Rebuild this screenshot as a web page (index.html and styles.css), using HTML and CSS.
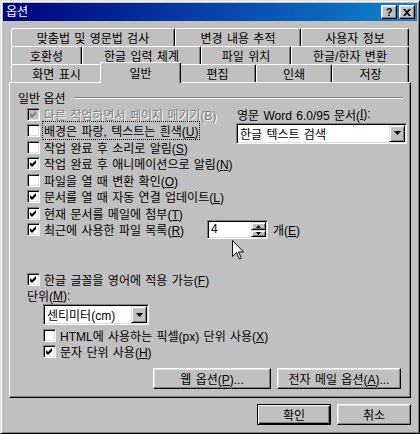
FILE: index.html
```html
<!DOCTYPE html>
<html lang="ko">
<head>
  <meta charset="utf-8">
  <title>옵션</title>
  <link rel="stylesheet" href="styles.css">
</head>
<body>
  <div class="window">
    <div class="title-bar">
      <span class="title">옵션</span>
      <div class="caption-buttons">
        <span class="caption-btn help">?</span>
        <span class="caption-btn"><svg width="8" height="7" viewBox="0 0 8 7"><path d="M0 0h2l2 2 2-2h2L5 3.5 8 7H6L4 5 2 7H0l3-3.5z"/></svg></span>
      </div>
    </div>

    <div class="dialog">
      <div class="tabs">
        <div class="tab-row row-1">
          <div class="tab">맞춤법 및 영문법 검사</div>
          <div class="tab">변경 내용 추적</div>
          <div class="tab">사용자 정보</div>
        </div>
        <div class="tab-row row-2">
          <div class="tab">호환성</div>
          <div class="tab">한글 입력 체계</div>
          <div class="tab">파일 위치</div>
          <div class="tab">한글/한자 변환</div>
        </div>
        <div class="tab-row row-3">
          <div class="tab">화면 표시</div>
          <div class="tab active">일반</div>
          <div class="tab">편집</div>
          <div class="tab">인쇄</div>
          <div class="tab">저장</div>
        </div>
      </div>

      <div class="panel">
        <div class="group-title">일반 옵션</div>

        <div class="options">
          <div class="split">
            <div class="split-left">
              <div class="check disabled">
                <span class="box"><svg width="7" height="7" viewBox="0 0 7 7"><path d="M0 2l2 2 4-4v3L2 7 0 5z"/></svg></span>
                <span>다른 작업하면서 페이지 매기기(B)</span>
              </div>
              <div class="check">
                <span class="box"></span>
                <span class="focus">배경은 파랑, 텍스트는 흰색(<u>U</u>)</span>
              </div>
            </div>
            <div class="split-right">
              <div class="field-label">영문 Word 6.0/95 문서(<u>I</u>):</div>
              <div class="combo wide">
                <span class="combo-text">한글 텍스트 검색</span>
                <span class="drop-btn"><svg width="7" height="4" viewBox="0 0 7 4"><path d="M0 0h7L3.5 4z"/></svg></span>
              </div>
            </div>
          </div>

          <div class="check">
            <span class="box"></span>
            <span>작업 완료 후 소리로 알림(<u>S</u>)</span>
          </div>
          <div class="check">
            <span class="box"><svg width="7" height="7" viewBox="0 0 7 7"><path d="M0 2l2 2 4-4v3L2 7 0 5z"/></svg></span>
            <span>작업 완료 후 애니메이션으로 알림(<u>N</u>)</span>
          </div>
          <div class="check">
            <span class="box"></span>
            <span>파일을 열 때 변환 확인(<u>O</u>)</span>
          </div>
          <div class="check">
            <span class="box"><svg width="7" height="7" viewBox="0 0 7 7"><path d="M0 2l2 2 4-4v3L2 7 0 5z"/></svg></span>
            <span>문서를 열 때 자동 연결 업데이트(<u>L</u>)</span>
          </div>
          <div class="check">
            <span class="box"><svg width="7" height="7" viewBox="0 0 7 7"><path d="M0 2l2 2 4-4v3L2 7 0 5z"/></svg></span>
            <span>현재 문서를 메일에 첨부(<u>T</u>)</span>
          </div>
          <div class="recent">
            <div class="check recent-check">
              <span class="box"><svg width="7" height="7" viewBox="0 0 7 7"><path d="M0 2l2 2 4-4v3L2 7 0 5z"/></svg></span>
              <span>최근에 사용한 파일 목록(<u>R</u>)</span>
            </div>
            <div class="spin">
              <span class="spin-text">4</span>
              <span class="spin-btns">
                <span class="spin-btn"><svg width="5" height="3" viewBox="0 0 5 3"><path d="M2.5 0L5 3H0z"/></svg></span>
                <span class="spin-btn"><svg width="5" height="3" viewBox="0 0 5 3"><path d="M0 0h5L2.5 3z"/></svg></span>
              </span>
            </div>
            <span class="unit">개(<u>E</u>)</span>
          </div>
        </div>

        <div class="options lower">
          <div class="check">
            <span class="box"><svg width="7" height="7" viewBox="0 0 7 7"><path d="M0 2l2 2 4-4v3L2 7 0 5z"/></svg></span>
            <span>한글 글꼴을 영어에 적용 가능(<u>F</u>)</span>
          </div>
          <div class="field-label">단위(<u>M</u>):</div>
          <div class="sub">
            <div class="combo small">
              <span class="combo-text">센티미터(cm)</span>
              <span class="drop-btn"><svg width="7" height="4" viewBox="0 0 7 4"><path d="M0 0h7L3.5 4z"/></svg></span>
            </div>
            <div class="check tight first">
              <span class="box"></span>
              <span>HTML에 사용하는 픽셀(px) 단위 사용(<u>X</u>)</span>
            </div>
            <div class="check tight">
              <span class="box"><svg width="7" height="7" viewBox="0 0 7 7"><path d="M0 2l2 2 4-4v3L2 7 0 5z"/></svg></span>
              <span>문자 단위 사용(<u>H</u>)</span>
            </div>
          </div>
        </div>

        <div class="panel-buttons">
          <button class="btn web">웹 옵션(<u>P</u>)...</button>
          <button class="btn mail">전자 메일 옵션(<u>A</u>)...</button>
        </div>
      </div>

      <div class="dialog-buttons">
        <button class="btn default">확인</button>
        <button class="btn">취소</button>
      </div>
    </div>

    <svg class="cursor" width="13" height="20" viewBox="0 0 13 20"><path d="M0.5 0.5v16l4-4 3 6.5 2-1-3-6h5z" fill="#fff" stroke="#000"/></svg>
  </div>
</body>
</html>
```

FILE: styles.css
```css
/* classic dialog look */
body {
  margin: 0;
  font-family: "Liberation Sans", "Noto Sans CJK KR", sans-serif;
  font-size: 12px;
  color: #000;
  background: #c0c0c0;
}

.window {
  position: relative;
  width: 420px;
  height: 434px;
  box-sizing: border-box;
  border: 1px solid;
  border-color: #dfdfdf #000 #000 #dfdfdf;
  box-shadow: inset 1px 1px #fff, inset -1px -1px #808080;
  padding: 2px;
  background: #c0c0c0;
  display: flex;
  flex-direction: column;
}

.title-bar {
  height: 18px;
  flex: none;
  display: flex;
  align-items: center;
  padding: 0 2px 0 3px;
  background: linear-gradient(to right, #000080, #1084d0);
  color: #fff;
}

.title {
  flex: 1;
  line-height: 16px;
}

.caption-buttons {
  display: flex;
  gap: 2px;
}

.caption-btn {
  width: 16px;
  height: 14px;
  box-sizing: border-box;
  border: 1px solid;
  border-color: #fff #000 #000 #fff;
  box-shadow: inset -1px -1px #808080, inset 1px 1px #dfdfdf;
  background: #c0c0c0;
  color: #000;
  display: flex;
  align-items: center;
  justify-content: center;
}

.caption-btn.help {
  font-weight: bold;
  font-size: 11px;
  line-height: 12px;
}

.caption-btn svg {
  display: block;
}

.dialog {
  flex: 1;
  display: flex;
  flex-direction: column;
  padding: 7px 6px 6px;
}

/* tabs */
.tabs {
  margin: 0 2px;
}

.tab-row {
  display: grid;
  height: 18px;
}

.row-1 { grid-template-columns: 164px 126px 108px; }
.row-2 { grid-template-columns: 71px 119px 90px 118px; }
.row-3 { grid-template-columns: 91px 77px 77px 76px 77px; }

.tab {
  border: 1px solid;
  border-bottom: 0;
  border-color: #fff #000 transparent #fff;
  border-radius: 2px 2px 0 0;
  box-shadow: inset -1px 0 #808080;
  display: flex;
  align-items: center;
  justify-content: center;
  white-space: nowrap;
  word-spacing: 1px;
}

.tab.active {
  position: relative;
  z-index: 1;
  margin: -2px -2px -1px;
  padding-bottom: 2px;
  background: #c0c0c0;
}

/* panel */
.panel {
  flex: 1;
  display: flex;
  flex-direction: column;
  border: 1px solid;
  border-color: #fff #000 #000 #fff;
  box-shadow: inset -1px -1px #808080;
  padding: 6px 7px 0 8px;
}

.group-title {
  display: flex;
  align-items: center;
  height: 16px;
}

.group-title::after {
  content: "";
  flex: 1;
  margin: 2px 0 0 8px;
  border-top: 1px solid #808080;
  border-bottom: 1px solid #fff;
}

.options {
  margin: 1px 0 0 9px;
}

.options.lower {
  margin-top: 33px;
}

.split {
  display: flex;
  height: 33px;
}

.split-left {
  width: 209px;
  flex: none;
}

.split-right {
  flex: 1;
  display: flex;
  flex-direction: column;
}

.check {
  display: flex;
  align-items: center;
  height: 16.5px;
  white-space: nowrap;
  word-spacing: 1px;
}

.check.tight {
  height: 16px;
}

.check.first {
  margin-top: 2px;
}

.box {
  width: 13px;
  height: 13px;
  flex: none;
  box-sizing: border-box;
  border: 1px solid;
  border-color: #808080 #fff #fff #808080;
  box-shadow: inset 1px 1px #000, inset -1px -1px #dfdfdf;
  background: #fff;
  margin-right: 4px;
  display: flex;
  align-items: center;
  justify-content: center;
}

.box svg {
  display: block;
}

.check.disabled {
  color: #808080;
  text-shadow: 1px 1px #fff;
}

.check.disabled .box {
  background: #c0c0c0;
  fill: #808080;
}

.focus {
  outline: 1px dotted #000;
  padding: 0 1px;
  margin-left: -1px;
}

.field-label {
  height: 16.5px;
  display: flex;
  align-items: center;
  white-space: nowrap;
  word-spacing: 1px;
}

.split-right .field-label {
  padding-left: 1px;
}

/* combo boxes */
.combo {
  flex: none;
  display: flex;
  align-items: center;
  height: 21px;
  box-sizing: border-box;
  border: 1px solid;
  border-color: #808080 #fff #fff #808080;
  box-shadow: inset 1px 1px #000, inset -1px -1px #dfdfdf;
  background: #fff;
  padding: 1px;
}

.combo.wide {
  width: 171px;
}

.combo.small {
  width: 106px;
}

.combo-text {
  flex: 1;
  padding-left: 2px;
  white-space: nowrap;
  word-spacing: 1px;
}

.drop-btn,
.spin-btn {
  box-sizing: border-box;
  border: 1px solid;
  border-color: #dfdfdf #000 #000 #dfdfdf;
  box-shadow: inset 1px 1px #fff, inset -1px -1px #808080;
  background: #c0c0c0;
  display: flex;
  align-items: center;
  justify-content: center;
}

.drop-btn {
  width: 16px;
  height: 17px;
}

.drop-btn svg,
.spin-btn svg {
  display: block;
}

.sub {
  margin-left: 16px;
}

/* recent files row */
.recent {
  display: flex;
  align-items: center;
  height: 16.5px;
}

.recent-check {
  width: 180px;
  flex: none;
}

.spin {
  width: 61px;
  height: 19px;
  flex: none;
  box-sizing: border-box;
  border: 1px solid;
  border-color: #808080 #fff #fff #808080;
  box-shadow: inset 1px 1px #000, inset -1px -1px #dfdfdf;
  background: #fff;
  padding: 1px;
  display: flex;
}

.spin-text {
  flex: 1;
  padding-left: 2px;
  line-height: 15px;
}

.spin-btns {
  width: 15px;
  display: flex;
  flex-direction: column;
}

.spin-btn {
  flex: 1;
}

.unit {
  margin-left: 5px;
}

/* buttons */
.btn {
  font: inherit;
  color: #000;
  height: 21px;
  padding: 0;
  border: 1px solid;
  border-color: #fff #000 #000 #fff;
  box-shadow: inset -1px -1px #808080, inset 1px 1px #dfdfdf;
  background: #c0c0c0;
  word-spacing: 1px;
}

.btn.default {
  border-color: #000;
  box-shadow: inset 1px 1px #fff, inset -1px -1px #000, inset -2px -2px #808080;
}

.panel-buttons {
  display: flex;
  justify-content: flex-end;
  gap: 6px;
  margin: 9px 2px 0 0;
}

.btn.web {
  width: 118px;
}

.btn.mail {
  width: 124px;
}

.dialog-buttons {
  display: flex;
  justify-content: flex-end;
  gap: 6px;
  margin-top: 6px;
}

.dialog-buttons .btn {
  width: 74px;
}

.cursor {
  position: absolute;
  left: 231px;
  top: 239px;
}
```
